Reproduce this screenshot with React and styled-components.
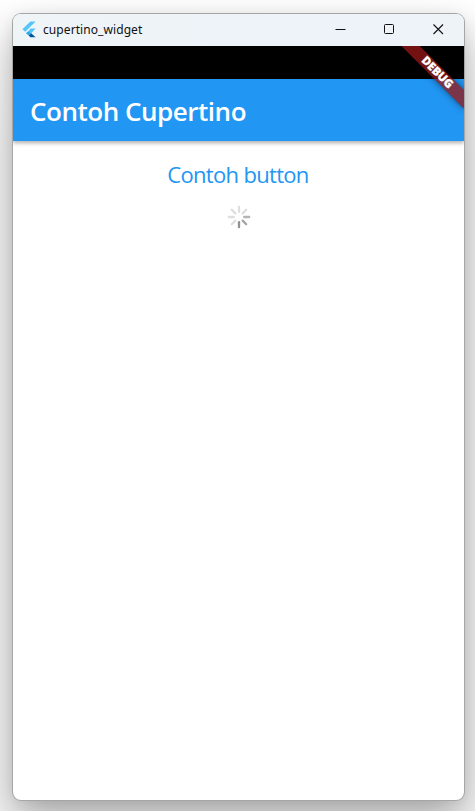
import React from 'react';
import styled, { createGlobalStyle } from 'styled-components';

const GlobalStyle = createGlobalStyle`
  * { box-sizing: border-box; }
  body { margin: 0; background: #f5f5f5; overflow: hidden; }
`;

const Desktop = styled.div`
  width: 475px;
  height: 811px;
  padding: 14px 11px 11px 13px;
  overflow: hidden;
  background: linear-gradient(#fff, #f6f6f6 20%, #f6f6f6);
  font-family: "Open Sans", "Noto Sans", sans-serif;
`;

const Window = styled.main`
  width: 451px;
  height: 786px;
  border-radius: 8px;
  background: #fff;
  box-shadow: 0 0 0 1px #a6a6a6, 0 18px 40px rgba(0, 0, 0, 0.33), 0 1px 14px rgba(0, 0, 0, 0.06);
`;

const TitleBar = styled.header`
  height: 32px;
  display: flex;
  align-items: center;
  padding-left: 9px;
  border-radius: 8px 8px 0 0;
  background: linear-gradient(90deg, #eff4f7, #eef3fa 65%, #eef3f8);
`;

const WindowTitle = styled.span`
  flex: 1;
  margin-left: 6px;
  font-family: "Noto Sans", sans-serif;
  font-size: 12px;
  line-height: 18px;
  letter-spacing: 0.08px;
  color: #111;
`;

const Controls = styled.div`
  display: flex;
`;

const Control = styled.button`
  width: ${(p) => p.$width}px;
  height: 32px;
  padding: 0 1px 2px 0;
  border: 0;
  background: none;
  display: grid;
  place-items: center;
`;

const Screen = styled.section`
  position: relative;
  height: 754px;
  overflow: hidden;
  border-radius: 0 0 8px 8px;
`;

const StatusBar = styled.div`
  height: 33px;
  background: #000;
`;

const AppBar = styled.div`
  height: 62px;
  display: flex;
  align-items: center;
  padding: 2px 0 0 17px;
  background: #2196f3;
  box-shadow: 0 2px 4px rgba(0, 0, 0, 0.25), 0 1px 5px rgba(0, 0, 0, 0.12);
`;

const AppTitle = styled.h1`
  margin: 0;
  font-size: 26px;
  font-weight: 600;
  line-height: 36px;
  letter-spacing: -0.47px;
  white-space: nowrap;
  color: #fff;
`;

const Content = styled.div`
  display: flex;
  flex-direction: column;
  align-items: center;
  padding-top: 17px;
`;

const TextButton = styled.button`
  padding: 0;
  margin-right: 1px;
  border: 0;
  background: none;
  font-family: "Open Sans", sans-serif;
  font-size: 22px;
  line-height: 32px;
  letter-spacing: -0.68px;
  color: #2196f3;
`;

const Spinner = styled.svg`
  margin-top: 15px;
`;

const Ribbon = styled.div`
  position: absolute;
  left: 380.2px;
  top: 20px;
  width: 88px;
  height: 13.2px;
  transform: rotate(45deg);
  background:
    linear-gradient(rgba(183, 28, 28, 0.627), rgba(183, 28, 28, 0.627)),
    rgba(0, 0, 0, 0.36);
  box-shadow: 0 0 7px rgba(0, 0, 0, 0.5);
  color: #fff;
  font-size: 11.6px;
  font-weight: 800;
  line-height: 12.4px;
  letter-spacing: -0.15px;
  text-align: center;
  -webkit-text-stroke: 0.25px #fff;
`;

const ticks = ['#dedede', '#dedede', '#b4b4b4', '#a5a5a5', '#919191', '#dedede', '#dedede', '#dedede'];

function FlutterLogo() {
  return (
    <svg width="15" height="18" viewBox="0 0 15 18">
      <path d="M8.4 .6h5.2L3.2 10.8.4 8.2z" fill="#54c5f8" />
      <path d="M8.6 7.6h5L9.2 12.2 6.5 9.9z" fill="#54c5f8" />
      <path d="M4 12.3l2.5-2.4 2.7 2.3-2.5 2.4z" fill="#29a9ec" />
      <path d="M6.7 14.6l2.5-2.4 4.4 4H8.4z" fill="#01579b" />
    </svg>
  );
}

export default function App() {
  return (
    <>
      <GlobalStyle />
      <Desktop>
        <Window>
          <TitleBar>
            <FlutterLogo />
            <WindowTitle>cupertino_widget</WindowTitle>
            <Controls>
              <Control $width={49} aria-label="Minimize">
                <svg width="11" height="10"><path d="M.5 5.5h10" stroke="#111" /></svg>
              </Control>
              <Control $width={49} aria-label="Maximize">
                <svg width="11" height="11"><rect x=".5" y=".5" width="9" height="9" rx="1" fill="none" stroke="#111" /></svg>
              </Control>
              <Control $width={50} aria-label="Close">
                <svg width="11" height="11"><path d="M.5.5l9.5 9.5M10 .5L.5 10" stroke="#111" strokeWidth="1.1" /></svg>
              </Control>
            </Controls>
          </TitleBar>
          <Screen>
            <StatusBar />
            <AppBar><AppTitle>Contoh Cupertino</AppTitle></AppBar>
            <Content>
              <TextButton>Contoh button</TextButton>
              <Spinner width="24" height="24" viewBox="-12 -12 24 24">
                {ticks.map((color, i) => (
                  <path key={i} d="M0-5.2V-10.2" stroke={color} strokeWidth="2.3" strokeLinecap="round" transform={`rotate(${i * 45})`} />
                ))}
              </Spinner>
            </Content>
            <Ribbon>DEBUG</Ribbon>
          </Screen>
        </Window>
      </Desktop>
    </>
  );
}
